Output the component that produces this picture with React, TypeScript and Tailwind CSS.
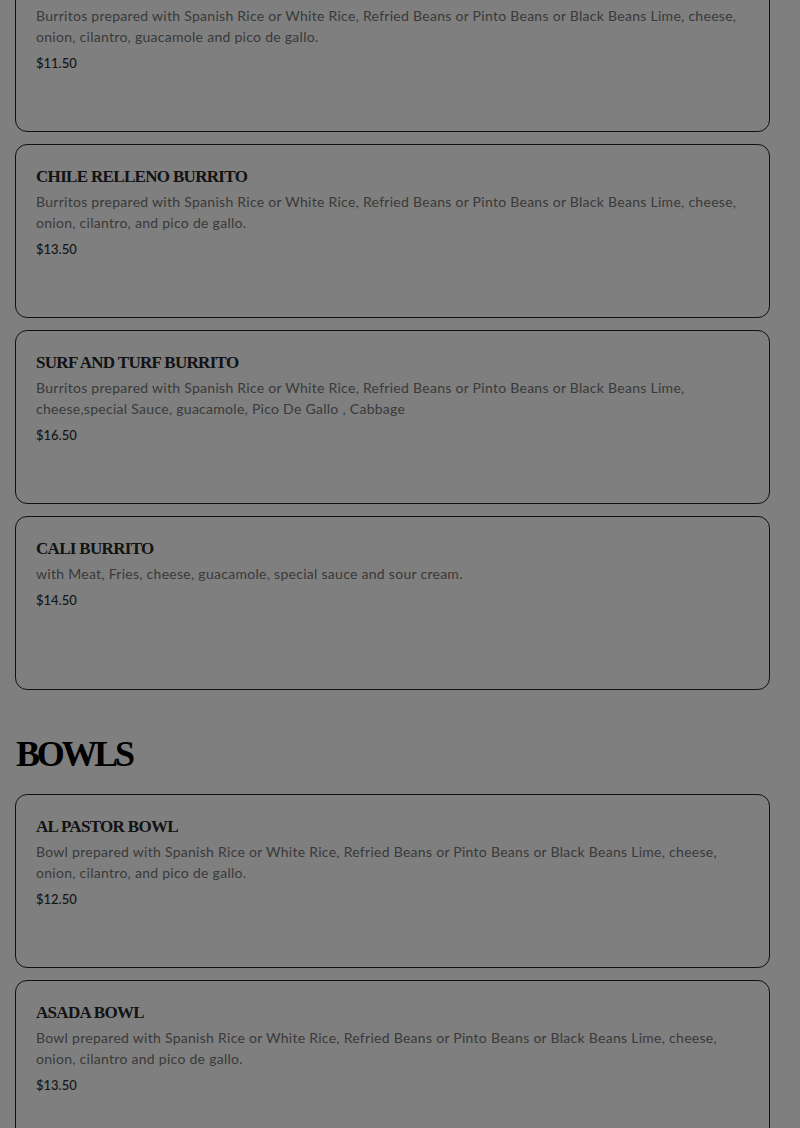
import React from "react";

type Item = { name: string; desc: string; price: string };

// first card is scrolled past the top; its name is out of view
const burritos: Item[] = [
  {
    name: "",
    desc: "Burritos prepared with Spanish Rice or White Rice, Refried Beans or Pinto Beans or Black Beans Lime, cheese, onion, cilantro, guacamole and pico de gallo.",
    price: "$11.50",
  },
  {
    name: "CHILE RELLENO BURRITO",
    desc: "Burritos prepared with Spanish Rice or White Rice, Refried Beans or Pinto Beans or Black Beans Lime, cheese, onion, cilantro, and pico de gallo.",
    price: "$13.50",
  },
  {
    name: "SURF AND TURF BURRITO",
    desc: "Burritos prepared with Spanish Rice or White Rice, Refried Beans or Pinto Beans or Black Beans Lime, cheese,special Sauce, guacamole, Pico De Gallo , Cabbage",
    price: "$16.50",
  },
  {
    name: "CALI BURRITO",
    desc: "with Meat, Fries, cheese, guacamole, special sauce and sour cream.",
    price: "$14.50",
  },
];

const bowls: Item[] = [
  {
    name: "AL PASTOR BOWL",
    desc: "Bowl prepared with Spanish Rice or White Rice, Refried Beans or Pinto Beans or Black Beans Lime, cheese, onion, cilantro, and pico de gallo.",
    price: "$12.50",
  },
  {
    name: "ASADA BOWL",
    desc: "Bowl prepared with Spanish Rice or White Rice, Refried Beans or Pinto Beans or Black Beans Lime, cheese, onion, cilantro and pico de gallo.",
    price: "$13.50",
  },
];

const MenuCard = ({ item }: { item: Item }) => (
  <div className="h-[174px] w-[755px] rounded-xl border border-[#1c2420] px-5 pt-5">
    <p className="min-h-6 font-['Liberation_Serif',serif] text-[17px] font-bold leading-6 tracking-[-0.04em] text-[#262626]">
      {item.name}
    </p>
    <p className="mt-[2px] font-['Lato',sans-serif] text-[14px] leading-[21px] tracking-[0.02em] text-[#747474]">
      {item.desc}
    </p>
    <p className="mt-[6px] font-['Lato',sans-serif] text-[13px] font-medium leading-[21px] text-[#2e2e2e]">
      {item.price}
    </p>
  </div>
);

export default function App() {
  return (
    <div className="relative h-[1128px] overflow-hidden bg-white">
      <div className="-mt-[42px] px-[15px]">
        <div className="flex flex-col gap-3">
          {burritos.map((item) => (
            <MenuCard key={item.price + item.name} item={item} />
          ))}
        </div>
        <h2 className="mt-[43px] mb-[18px] pl-px font-['Liberation_Serif',serif] text-[36px] font-bold leading-[43px] tracking-[-0.09em] text-black">
          BOWLS
        </h2>
        <div className="flex flex-col gap-3">
          {bowls.map((item) => (
            <MenuCard key={item.name} item={item} />
          ))}
        </div>
      </div>
      <div className="fixed inset-0 bg-black/50" />
    </div>
  );
}
